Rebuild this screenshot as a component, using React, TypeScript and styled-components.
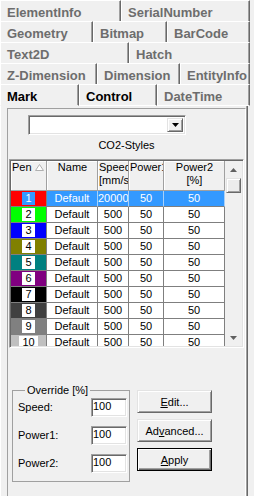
import React from "react";
import styled, { createGlobalStyle, css } from "styled-components";

const GlobalStyle = createGlobalStyle`
  html, body {
    margin: 0;
    padding: 0;
    background: #f0f0f0;
  }
  body {
    font-family: "Liberation Sans", Arial, sans-serif;
    font-size: 11px;
    color: #000;
  }
  * {
    box-sizing: border-box;
  }
`;

const sunken = css`
  border: 1px solid;
  border-color: #a0a0a0 #fff #fff #a0a0a0;
  box-shadow: inset 1px 1px #696969, inset -1px -1px #e3e3e3;
`;

const raised = css`
  border: 1px solid;
  border-color: #e3e3e3 #696969 #696969 #e3e3e3;
  box-shadow: inset 1px 1px #fff, inset -1px -1px #a0a0a0;
`;

const Window = styled.div`
  width: 254px;
  height: 496px;
  overflow: hidden;
  background: #f0f0f0;
`;

const TabRow = styled.div<{ $bottom?: boolean }>`
  display: flex;
  height: ${({ $bottom }) => ($bottom ? 22 : 21)}px;
`;

const Tab = styled.div<{
  $width: number;
  $active?: boolean;
  $strong?: boolean;
  $bottom?: boolean;
}>`
  width: ${({ $width }) => $width}px;
  flex-shrink: 0;
  padding: 3px 0 0 6px;
  line-height: 17px;
  font-size: 13px;
  font-weight: bold;
  white-space: nowrap;
  overflow: hidden;
  color: ${({ $active, $strong }) => ($active || $strong ? "#000" : "#6d6d6d")};
  border-top: 1px solid #fff;
  border-left: 1px solid #fff;
  border-right: 1px solid #696969;
  box-shadow: inset -1px 0 #a0a0a0;
  ${({ $bottom, $active }) =>
    $bottom &&
    css`
      border-bottom: 1px solid ${$active ? "#f0f0f0" : "#fff"};
    `}
`;

const Page = styled.div`
  width: 248px;
  height: 390px;
  border-left: 1px solid #fff;
  border-right: 1px solid #696969;
  box-shadow: inset -1px 0 #a0a0a0;
  padding: 2px 1px 0 6px;
`;

const Frame = styled.div`
  height: 100%;
  border-left: 1px solid #a0a0a0;
  border-top: 1px solid #a0a0a0;
  border-right: 1px solid #fff;
  display: flex;
  flex-direction: column;
`;

const Combo = styled.div`
  ${sunken};
  margin: 6px 0 0 20px;
  width: 158px;
  height: 20px;
  background: #fff;
  display: flex;
  justify-content: flex-end;
  padding: 2px;
`;

const DropButton = styled.div`
  ${raised};
  width: 16px;
  height: 100%;
  background: #f0f0f0;
  display: flex;
  align-items: center;
  justify-content: center;
`;

const Caption = styled.div`
  margin-top: 4px;
  line-height: 13px;
  text-align: center;
`;

const GridBox = styled.div`
  ${sunken};
  margin: 7px 0 0 1px;
  width: 235px;
  height: 189px;
  display: flex;
  padding: 1px;
  background: #fff;
`;

const Table = styled.div`
  width: 214px;
  height: 100%;
  overflow: hidden;
  display: grid;
  grid-template-columns: 36px 51px 31px 35px 61px;
  grid-template-rows: 30px;
  grid-auto-rows: 16px;
  align-content: start;
`;

const HeadCell = styled.div<{ $align?: "left" | "center" }>`
  background: #f0f0f0;
  border-right: 1px solid #a0a0a0;
  border-bottom: 1px solid #a0a0a0;
  box-shadow: inset 1px 1px #fff;
  line-height: 13px;
  padding-left: 1px;
  white-space: pre;
  overflow: hidden;
  text-align: ${({ $align }) => $align || "left"};
  display: flex;
  align-items: flex-start;
  justify-content: ${({ $align }) => ($align === "center" ? "center" : "flex-start")};
`;

const SortArrow = styled.svg`
  margin: 3px 2px 0 auto;
  flex-shrink: 0;
`;

const Cell = styled.div<{ $selected?: boolean }>`
  border-right: 1px solid ${({ $selected }) => ($selected ? "#a8d0f8" : "#7f7f7f")};
  border-bottom: 1px solid #7f7f7f;
  line-height: 15px;
  text-align: center;
  white-space: nowrap;
  overflow: hidden;
  background: ${({ $selected }) => ($selected ? "#3399ff" : "#fff")};
  color: ${({ $selected }) => ($selected ? "#fff" : "#000")};
`;

const PenCell = styled.div<{ $color: string }>`
  background: ${({ $color }) => $color};
  border-right: 1px solid #7f7f7f;
  border-bottom: 1px solid #7f7f7f;
  display: flex;
  align-items: center;
  justify-content: center;
`;

const PenBox = styled.span<{ $selected?: boolean }>`
  min-width: 13px;
  height: 13px;
  line-height: 13px;
  padding: 0 3px;
  text-align: center;
  background: ${({ $selected }) => ($selected ? "#3399ff" : "#fff")};
  color: ${({ $selected }) => ($selected ? "#fff" : "#000")};
`;

const ScrollBar = styled.div`
  width: 17px;
  height: 100%;
  background: #f0f0f0;
  display: flex;
  flex-direction: column;
  align-items: center;
`;

const ScrollArrow = styled.div`
  width: 17px;
  height: 17px;
  display: flex;
  align-items: center;
  justify-content: center;
`;

const Thumb = styled.div`
  ${raised};
  width: 15px;
  height: 15px;
  background: #ececec;
`;

const Track = styled.div`
  flex: 1;
`;

const Bottom = styled.div`
  display: flex;
  margin: 36px 0 0 4px;
`;

const GroupBox = styled.fieldset`
  margin: 0;
  width: 118px;
  padding: 1px 2px 8px 5px;
  border: 1px solid #a0a0a0;
  display: grid;
  grid-template-columns: 73px 36px;
  grid-auto-rows: 19px;
  row-gap: 9px;
  align-items: center;
`;

const Legend = styled.legend`
  margin-left: 7px;
  padding: 0 2px;
  line-height: 13px;
`;

const Label = styled.span`
  line-height: 13px;
`;

const Input = styled.div`
  ${sunken};
  height: 19px;
  background: #fff;
  line-height: 15px;
  padding-left: 1px;
`;

const Buttons = styled.div`
  display: flex;
  flex-direction: column;
  gap: 6px;
  margin: 6px 0 0 7px;
`;

const Button = styled.div<{ $default?: boolean }>`
  width: 75px;
  height: 23px;
  display: flex;
  align-items: center;
  justify-content: center;
  background: #f0f0f0;
  ${({ $default }) =>
    $default
      ? css`
          border: 1px solid #000;
          box-shadow: inset 1px 1px #fff, inset -1px -1px #696969,
            inset -2px -2px #a0a0a0;
        `
      : raised}
`;

const tabRows = [
  [
    { label: "ElementInfo", width: 121 },
    { label: "SerialNumber", width: 129 },
  ],
  [
    { label: "Geometry", width: 93 },
    { label: "Bitmap", width: 74 },
    { label: "BarCode", width: 83 },
  ],
  [
    { label: "Text2D", width: 129 },
    { label: "Hatch", width: 121 },
  ],
  [
    { label: "Z-Dimension", width: 97 },
    { label: "Dimension", width: 83 },
    { label: "EntityInfo", width: 70 },
  ],
  [
    { label: "Mark", width: 79, active: true },
    { label: "Control", width: 78, strong: true },
    { label: "DateTime", width: 93 },
  ],
];

const pens = [
  { n: 1, color: "#ff0000", speed: "20000", selected: true },
  { n: 2, color: "#00ff00" },
  { n: 3, color: "#0000ff" },
  { n: 4, color: "#808000" },
  { n: 5, color: "#008080" },
  { n: 6, color: "#800080" },
  { n: 7, color: "#000000" },
  { n: 8, color: "#404040" },
  { n: 9, color: "#808080" },
  { n: 10, color: "#c0c0c0" },
];

const Triangle = ({ down }: { down?: boolean }) => (
  <svg width="7" height="4" viewBox="0 0 7 4">
    <polygon
      points={down ? "0,0 7,0 3.5,4" : "3.5,0 7,4 0,4"}
      fill="#606060"
    />
  </svg>
);

const App: React.FC = () => (
  <Window>
    <GlobalStyle />
    {tabRows.map((row, r) => {
      const bottom = r === tabRows.length - 1;
      return (
        <TabRow key={r} $bottom={bottom}>
          {row.map((t) => (
            <Tab
              key={t.label}
              $width={t.width}
              $active={"active" in t && t.active}
              $strong={"strong" in t && t.strong}
              $bottom={bottom}
            >
              {t.label}
            </Tab>
          ))}
        </TabRow>
      );
    })}
    <Page>
      <Frame>
        <Combo>
          <DropButton>
            <svg width="7" height="4" viewBox="0 0 7 4">
              <polygon points="0,0 7,0 3.5,4" fill="#000" />
            </svg>
          </DropButton>
        </Combo>
        <Caption>CO2-Styles</Caption>
        <GridBox>
          <Table>
            <HeadCell>
              Pen
              <SortArrow width="9" height="7" viewBox="0 0 9 7">
                <polygon
                  points="4.5,0.5 8.5,6.5 0.5,6.5"
                  fill="#fff"
                  stroke="#b0b0b0"
                />
              </SortArrow>
            </HeadCell>
            <HeadCell $align="center">Name</HeadCell>
            <HeadCell>{"Speed\n[mm/s]"}</HeadCell>
            <HeadCell>Power1</HeadCell>
            <HeadCell $align="center">{"Power2\n[%]"}</HeadCell>
            {pens.map((p) => (
              <React.Fragment key={p.n}>
                <PenCell $color={p.color}>
                  <PenBox $selected={p.selected}>{p.n}</PenBox>
                </PenCell>
                <Cell $selected={p.selected}>Default</Cell>
                <Cell $selected={p.selected}>{p.speed || "500"}</Cell>
                <Cell $selected={p.selected}>50</Cell>
                <Cell $selected={p.selected}>50</Cell>
              </React.Fragment>
            ))}
          </Table>
          <ScrollBar>
            <ScrollArrow>
              <Triangle />
            </ScrollArrow>
            <Thumb />
            <Track />
            <ScrollArrow>
              <Triangle down />
            </ScrollArrow>
          </ScrollBar>
        </GridBox>
        <Bottom>
          <GroupBox>
            <Legend>Override [%]</Legend>
            <Label>Speed:</Label>
            <Input>100</Input>
            <Label>Power1:</Label>
            <Input>100</Input>
            <Label>Power2:</Label>
            <Input>100</Input>
          </GroupBox>
          <Buttons>
            <Button>
              <span>
                <u>E</u>dit...
              </span>
            </Button>
            <Button>
              <span>
                Ad<u>v</u>anced...
              </span>
            </Button>
            <Button $default>
              <span>
                <u>A</u>pply
              </span>
            </Button>
          </Buttons>
        </Bottom>
      </Frame>
    </Page>
  </Window>
);

export default App;
